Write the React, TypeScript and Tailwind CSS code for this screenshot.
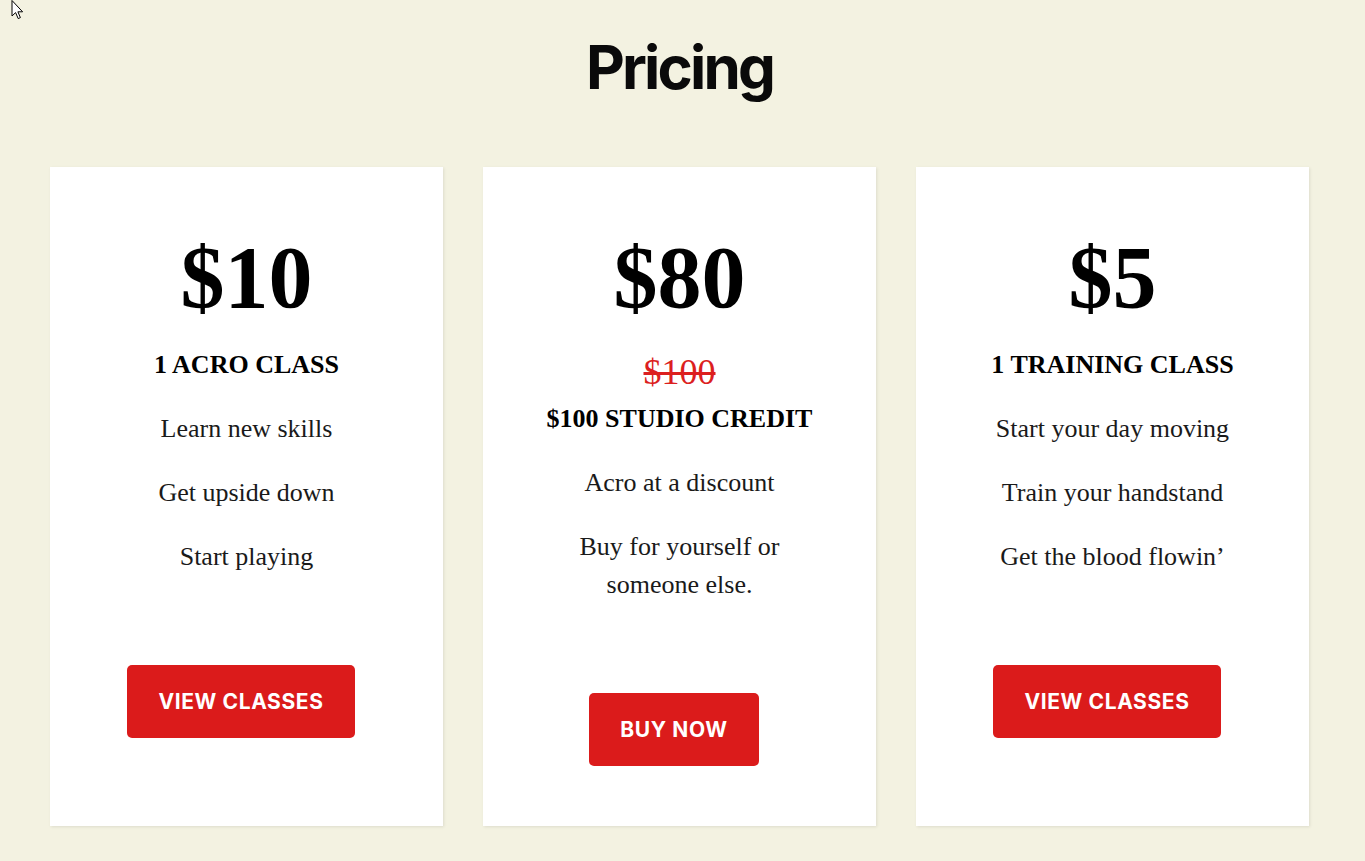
import React from 'react';

interface Plan {
  price: string;
  oldPrice?: string;
  title: string;
  lines: string[];
  cta: string;
}

const plans: Plan[] = [
  {
    price: '$10',
    title: '1 ACRO CLASS',
    lines: ['Learn new skills', 'Get upside down', 'Start playing'],
    cta: 'View classes',
  },
  {
    price: '$80',
    oldPrice: '$100',
    title: '$100 STUDIO CREDIT',
    lines: ['Acro at a discount', 'Buy for yourself or someone else.'],
    cta: 'Buy now',
  },
  {
    price: '$5',
    title: '1 TRAINING CLASS',
    lines: ['Start your day moving', 'Train your handstand', 'Get the blood flowin’'],
    cta: 'View classes',
  },
];

const serif = "font-['Liberation_Serif','Times_New_Roman',serif]";

const PriceCard: React.FC<{ plan: Plan }> = ({ plan }) => {
  return (
    <div className="flex flex-col items-center bg-white px-[60px] pt-[67px] pb-[60px] text-center shadow-[1px_1px_3px_rgba(0,0,0,0.09)]">
      <div className={`${serif} mb-[28px] text-[88px] font-bold leading-none text-black`}>
        {plan.price}
      </div>
      {plan.oldPrice && (
        <div className={`${serif} mb-[10px] text-[36px] leading-[44px] text-[#dc1f1f] line-through`}>
          {plan.oldPrice}
        </div>
      )}
      <h3 className={`${serif} mb-[30px] text-[26px] font-bold leading-[30px] text-black`}>
        {plan.title}
      </h3>
      <div className="flex flex-col gap-[26px]">
        {plan.lines.map((line) => (
          <p key={line} className={`${serif} text-[26px] leading-[38px] text-[#1a1a1a]`}>
            {line}
          </p>
        ))}
      </div>
      <button className="mt-[89px] mr-[11px] flex h-[73px] items-center justify-center rounded-[5px] bg-[#db1b1b] px-[31px] font-['Inter',sans-serif] text-[21px] font-bold uppercase tracking-[0.6px] text-white">
        {plan.cta}
      </button>
    </div>
  );
};

export default function App() {
  return (
    <div className="relative min-h-[861px] bg-[#f3f2e1] pt-[37px]">
      {/* mouse pointer left in the screenshot */}
      <svg className="absolute left-[11px] top-0" width="13" height="21" viewBox="0 0 13 21">
        <path d="M1 0.5 L1 16 L4.6 12.6 L7.2 18.6 L9.4 17.6 L6.9 11.8 L11.6 11.8 Z" fill="white" stroke="black" strokeWidth="1" strokeLinejoin="round" />
      </svg>
      <h1 className="mr-[6px] text-center font-['Inter',sans-serif] text-[60px] font-bold leading-none tracking-[-2.8px] text-[#0a0a0a]">
        Pricing
      </h1>
      <div className="mt-[70px] grid grid-cols-3 gap-[40px] pl-[50px] pr-[56px] pb-[35px]">
        {plans.map((plan) => (
          <PriceCard key={plan.price} plan={plan} />
        ))}
      </div>
    </div>
  );
}
